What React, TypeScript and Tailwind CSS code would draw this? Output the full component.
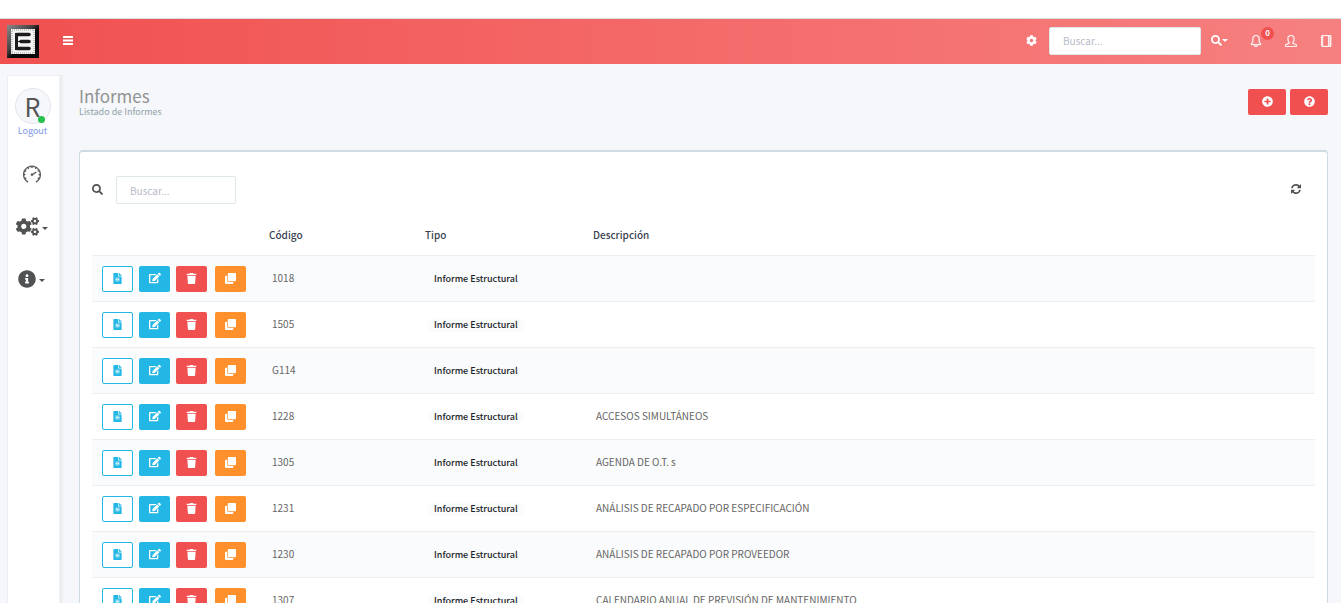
import type { ReactNode } from "react";
import {
  FaClone,
  FaCog,
  FaCogs,
  FaEdit,
  FaFileAlt,
  FaInfoCircle,
  FaPlusCircle,
  FaQuestionCircle,
  FaSearch,
  FaTrash,
} from "react-icons/fa";
import { SlBell, SlNotebook, SlSpeedometer, SlUser } from "react-icons/sl";

type Report = { code: string; type: string; description: string };

const reports: Report[] = [
  { code: "1018", type: "Informe Estructural", description: "" },
  { code: "1505", type: "Informe Estructural", description: "" },
  { code: "G114", type: "Informe Estructural", description: "" },
  { code: "1228", type: "Informe Estructural", description: "ACCESOS SIMULTÁNEOS" },
  { code: "1305", type: "Informe Estructural", description: "AGENDA DE O.T. s" },
  { code: "1231", type: "Informe Estructural", description: "ANÁLISIS DE RECAPADO POR ESPECIFICACIÓN" },
  { code: "1230", type: "Informe Estructural", description: "ANÁLISIS DE RECAPADO POR PROVEEDOR" },
  { code: "1307", type: "Informe Estructural", description: "CALENDARIO ANUAL DE PREVISIÓN DE MANTENIMIENTO" },
];

function Logo() {
  return (
    <svg viewBox="0 0 32 33" className="h-[33px] w-8" aria-hidden="true">
      <defs>
        <linearGradient id="logo-bevel" x1="0" y1="0" x2="1" y2="1">
          <stop offset="0%" stopColor="#8a8a8a" />
          <stop offset="40%" stopColor="#444" />
          <stop offset="55%" stopColor="#0a0a0a" />
        </linearGradient>
      </defs>
      <rect width="32" height="33" fill="url(#logo-bevel)" />
      <rect x="4" y="4" width="24" height="25" fill="#f4f4f4" />
      <rect x="5" y="5" width="22" height="23" fill="none" stroke="#999" strokeDasharray="1 1" />
      <path d="M8 8h3v17H8z" fill="#1c1c1c" />
      <path d="M10 9.500h12M14 16.500h8M10 23.500h12" fill="none" stroke="#1c1c1c" strokeWidth="3.600" strokeLinecap="round" />
      <path d="M11 16.500h3" fill="none" stroke="#1c1c1c" strokeWidth="1" />
    </svg>
  );
}

function MenuIcon() {
  return (
    <svg viewBox="0 0 10 9" className="h-[9px] w-[10px]" fill="currentColor" aria-hidden="true">
      <rect width="10" height="2" />
      <rect y="3.500" width="10" height="2" />
      <rect y="7" width="10" height="2" />
    </svg>
  );
}

function RefreshIcon() {
  return (
    <svg viewBox="0 0 1536 1536" className="size-[10px]" fill="currentColor" aria-hidden="true">
      <path d="M1511 928q0 5-1 7-64 268-268 434.500T764 1536q-146 0-282.500-55T238 1324l-129 129q-19 19-45 19t-45-19-19-45V960q0-26 19-45t45-19h448q26 0 45 19t19 45-19 45l-137 137q71 66 161 102t187 36q134 0 250-65t186-179q11-17 53-117 8-23 30-23h192q13 0 22.500 9.500t9.500 22.500zM1536 128v448q0 26-19 45t-45 19h-448q-26 0-45-19t-19-45 19-45l138-138Q969 256 768 256q-134 0-250 65T332 500q-11 17-53 117-8 23-30 23H50q-13 0-22.500-9.500T18 608v-7q65-268 270-434.500T768 0q146 0 284 55.500T1297 212l130-129q19-19 45-19t45 19 19 45z" />
    </svg>
  );
}

function Caret({ className = "" }: { className?: string }) {
  return <span className={`size-0 border-x-[3px] border-t-[3px] border-x-transparent border-t-current ${className}`} />;
}

function ActionButton({ label, className, children }: { label: string; className: string; children: ReactNode }) {
  return (
    <button
      type="button"
      aria-label={label}
      className={`flex h-[26px] w-[31px] items-center justify-center rounded-xs pb-px text-[11px] ${className}`}
    >
      {children}
    </button>
  );
}

function Header() {
  return (
    <header className="flex h-[46px] items-center border-t border-[#d9dfdf] bg-linear-to-r from-[#f05050] to-[#f68080] pr-[9px] pl-[7px] text-white">
      <a href="#" aria-label="Inicio">
        <Logo />
      </a>
      <button type="button" aria-label="Menú" className="ml-6 pb-[2px]">
        <MenuIcon />
      </button>
      <div className="ml-auto flex items-center pb-[2px]">
        <button type="button" aria-label="Configuración" className="mr-3 text-[11px]">
          <FaCog />
        </button>
        <input
          type="text"
          aria-label="Buscar"
          placeholder="Buscar..."
          className="h-7 w-[152px] rounded-xs border border-[#dde6e9] bg-white px-[13px] text-[10px] text-gray-700 placeholder:text-[#b7bac9]"
        />
        <button type="button" aria-label="Opciones de búsqueda" className="ml-[10px] flex items-center text-[11px]">
          <FaSearch />
          <Caret />
        </button>
        <button type="button" aria-label="Notificaciones" className="relative ml-[22px] text-[12px]">
          <SlBell stroke="currentColor" strokeWidth={30} />
          <span className="absolute -top-2 left-[11px] flex size-[13px] items-center justify-center rounded-full bg-[#f05050] text-[8px] leading-none font-bold">
            0
          </span>
        </button>
        <button type="button" aria-label="Usuario" className="ml-[23px] text-[12px]">
          <SlUser stroke="currentColor" strokeWidth={30} />
        </button>
        <button type="button" aria-label="Panel" className="ml-[23px] text-[12px]">
          <SlNotebook stroke="currentColor" strokeWidth={50} />
        </button>
      </div>
    </header>
  );
}

function Sidebar() {
  return (
    <nav className="mt-[11px] ml-[7px] flex w-14 shrink-0 flex-col items-center border-t border-r-4 border-l border-[#eeeff1] bg-white pt-3 pr-[2px] text-[#515253]">
      <div className="relative flex size-9 items-center justify-center rounded-full border border-[#e1e4ea] bg-[#f5f7fa] text-[25px] leading-none text-[#555]">
        R
        <span className="absolute right-[5px] bottom-0 size-[7px] rounded-full bg-[#27c24c]" />
      </div>
      <a href="#" className="text-[9px] leading-[14px] text-[#7d97e8]">
        Logout
      </a>
      <button type="button" aria-label="Panel de control" className="mt-[27px] pr-[2px] text-[18px]">
        <SlSpeedometer stroke="currentColor" strokeWidth={16} />
      </button>
      <button type="button" aria-label="Ajustes" className="mt-8 flex items-center gap-[3px] pr-[2px] text-[23px]">
        <FaCogs />
        <Caret className="mt-[3px]" />
      </button>
      <button type="button" aria-label="Información" className="mt-8 flex items-center gap-[3px] pr-[2px] text-[18px]">
        <FaInfoCircle />
        <Caret className="mt-[3px]" />
      </button>
    </nav>
  );
}

function ReportTable() {
  return (
    <table className="mt-2 w-full table-fixed border-collapse text-left text-[10px] leading-4">
      <colgroup>
        <col className="w-[170px]" />
        <col className="w-[156px]" />
        <col className="w-[168px]" />
        <col />
      </colgroup>
      <thead>
        <tr className="h-[43px] text-[#3a3f51]">
          <th aria-label="Acciones" />
          <th className="px-[7px] pt-1 font-medium">Código</th>
          <th className="px-[7px] pt-1 font-medium">Tipo</th>
          <th className="px-[7px] pt-1 font-medium">Descripción</th>
        </tr>
      </thead>
      <tbody>
        {reports.map((r) => (
          <tr key={r.code} className="h-[46px] border-t border-[#eee] text-[#656565] odd:bg-[#fafbfc]">
            <td className="px-[10px] pt-px">
              <div className="flex gap-[6px]">
                <ActionButton label="Ver" className="border border-[#23b7e5] bg-white text-[#23b7e5]">
                  <FaFileAlt />
                </ActionButton>
                <ActionButton label="Editar" className="bg-[#23b7e5] text-white">
                  <FaEdit className="size-3" />
                </ActionButton>
                <ActionButton label="Eliminar" className="bg-[#f05050] text-white">
                  <FaTrash />
                </ActionButton>
                <ActionButton label="Duplicar" className="ml-[2px] bg-[#ff902b] text-white">
                  <FaClone />
                </ActionButton>
              </div>
            </td>
            <td className="px-[10px] pb-px">{r.code}</td>
            <td className="px-[10px] pb-px">
              <span className="inline-block rounded-full bg-[#fafbfc] px-[6px] text-[9px] leading-[14px] font-medium text-[#212529]">
                {r.type}
              </span>
            </td>
            <td className="px-[10px] pb-px">{r.description}</td>
          </tr>
        ))}
      </tbody>
    </table>
  );
}

export default function App() {
  return (
    <div className="flex h-screen flex-col overflow-hidden bg-white pt-[18px] font-['Noto_Sans_CJK_SC','Open_Sans',sans-serif]">
      <Header />
      <div className="flex min-h-0 flex-1 bg-[#f5f7fa]">
        <Sidebar />
        <main className="min-w-0 flex-1 pt-[21px] pr-[13px] pl-4">
          <div className="flex items-start justify-between">
            <div className="text-[#929292]">
              <h1 className="text-[17px] leading-[22px]">Informes</h1>
              <p className="text-[9px] leading-[10px] text-[#909fa7]">Listado de Informes</p>
            </div>
            <div className="mt-1 flex gap-1 text-[11px] text-white">
              <button type="button" aria-label="Añadir" className="flex h-[26px] w-[38px] items-center justify-center rounded-xs bg-[#f05050] pb-[2px]">
                <FaPlusCircle />
              </button>
              <button type="button" aria-label="Ayuda" className="flex h-[26px] w-[38px] items-center justify-center rounded-xs bg-[#f05050] pb-[2px]">
                <FaQuestionCircle />
              </button>
            </div>
          </div>
          <section className="mt-[33px] rounded-sm border border-t-2 border-[#cfdbe2] bg-white px-3 pt-6">
            <div className="flex items-center text-[#515253]">
              <span className="pb-[2px]">
                <FaSearch className="text-[11px]" />
              </span>
              <input
                type="text"
                aria-label="Buscar informes"
                placeholder="Buscar..."
                className="ml-[13px] h-7 w-[120px] rounded-xs border border-[#dde6e9] px-[13px] text-[10px] placeholder:text-[#b7bac9]"
              />
              <button type="button" aria-label="Actualizar" className="mr-[14px] ml-auto pb-[2px]">
                <RefreshIcon />
              </button>
            </div>
            <ReportTable />
          </section>
        </main>
      </div>
    </div>
  );
}
